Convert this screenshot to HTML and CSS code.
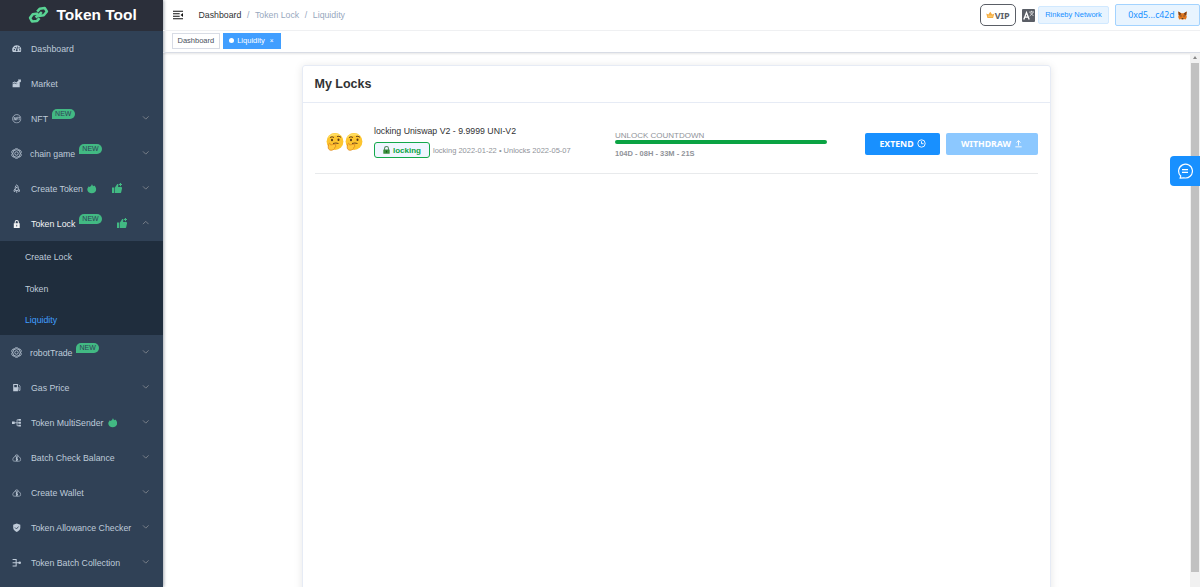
FILE: index.html
```html
<!DOCTYPE html>
<html lang="en">
<head>
    <meta charset="utf-8">
    <title>Token Tool</title>
    <link rel="stylesheet" href="styles.css">
</head>
<body>
    <svg class="sprite">
        <symbol id="down" viewBox="0 0 8 8"><path d="M1 2.5l3 3 3-3" fill="none" stroke="currentColor" stroke-width=".8"/></symbol>
        <symbol id="gauge" viewBox="0 0 16 16"><path fill="currentColor" fill-rule="evenodd" d="M8 2a7.5 7.5 0 0 0-6.500 11.500h13A7.500 7.500 0 0 0 8 2zM3 8.500h2v2H3zM4.500 5h2v2h-2zM8.500 4h1.500L9 9.500a1.500 1.500 0 1 1-2 0zM11 5.500h2v2h-2zM12 9h2v2h-2z"/></symbol>
        <symbol id="chart" viewBox="0 0 16 16"><path fill="currentColor" d="M1 9l3-2 3 2 6-5v10H1zM1 6l3.500-2L7 6l4-3.500L10 1h5v5l-1.300-1.500L7 8 4.500 6 1 8z"/></symbol>
        <symbol id="nft" viewBox="0 0 16 16"><circle cx="8" cy="8" r="7" fill="none" stroke="currentColor" stroke-width="1.200"/><path d="M3.800 10.500v-5l2.500 5v-5M8 10.500v-5h2M8 8h2M10.500 5.500h3M12 5.500v5" fill="none" stroke="currentColor" stroke-width="1.200"/></symbol>
        <symbol id="atom" viewBox="0 0 16 16"><g fill="none" stroke="currentColor" stroke-width="1.200"><circle cx="8" cy="8" r="2.500"/><circle cx="8" cy="8" r="5.500"/><path d="M5 2.500C6 .500 10 .500 11 2.500l2.800 1c1.500 1.500 1.500 3 .2 4.500 1.300 1.500 1.300 3-.2 4.500l-2.800 1c-1 2-5 2-6 0l-2.800-1C.700 11 .700 9.500 2 8 .700 6.500.700 5 2.200 3.500z"/></g></symbol>
        <symbol id="rocket" viewBox="0 0 16 16"><path d="M5.500 11V5.500C5.500 3.500 7 2 8 1.500c1 .5 2.500 2 2.500 4V11zM5.500 8L3.500 10v2.500h2M10.500 8l2 2v2.500h-2M8 11v4" fill="none" stroke="currentColor" stroke-width="1.400"/><circle cx="8" cy="6" r="1.300" fill="currentColor"/></symbol>
        <symbol id="lock" viewBox="0 0 16 16"><path fill="currentColor" fill-rule="evenodd" d="M3 7h1.500V5a3.500 3.500 0 0 1 7 0v2H13v8H3zM6.200 7h3.600V5a1.800 1.800 0 0 0-3.600 0zM7.300 9.500v3h1.400v-3z"/></symbol>
        <symbol id="gas" viewBox="0 0 16 16"><path fill="currentColor" fill-rule="evenodd" d="M2 1.500h8V14H2zM3.800 3.500V7h4.400V3.500z"/><path d="M10 8h1.500v4.500h2V5L11.500 3" fill="none" stroke="currentColor" stroke-width="1.200"/></symbol>
        <symbol id="tree" viewBox="0 0 16 16"><path d="M2 8h7M12 3H8.500v10H12M9 8h3" fill="none" stroke="currentColor" stroke-width="1.300"/><path fill="currentColor" d="M0 6h4.500v4H0zM11 1.500h4v3h-4zM11 6.500h4v3h-4zM11 11.500h4v3h-4z"/></symbol>
        <symbol id="wallet" viewBox="0 0 16 16"><path d="M5.500 5.500a2.500 2.500 0 1 1 5 0C14 7 15 10 14.500 12.500c-.5 2-12.500 2-13 0C1 10 2 7 5.500 5.500zM5.500 5.500h5" fill="none" stroke="currentColor" stroke-width="1.100"/><path d="M8 6.500v7M9.500 8H7.300v2h1.900v2H6.500" fill="none" stroke="currentColor" stroke-width="1.500"/></symbol>
        <symbol id="shield" viewBox="0 0 16 16"><path fill="currentColor" d="M8 1l6 2v5c0 3.500-3 5.500-6 7-3-1.500-6-3.500-6-7V3z"/><path d="M5 7.500L7.500 10 11 6" fill="none" stroke="#304156" stroke-width="1.500"/></symbol>
        <symbol id="merge" viewBox="0 0 16 16"><path d="M1 2.500h6v11H1M1 8h12" fill="none" stroke="currentColor" stroke-width="1.700"/><circle cx="13" cy="8" r="2.200" fill="currentColor"/></symbol>
        <symbol id="flame" viewBox="0 0 16 16"><path fill="currentColor" d="M8.500 0c0 2.500 1.500 3.500 3 4l1-1c2 2 3 4.500 3 6.500C15.500 13.500 12 16 8 16S.500 13.500.500 9.500C.500 7 2 5.500 3 4l1 1.500C6.500 4.500 8 2.500 8.500 0z"/></symbol>
        <symbol id="thumb" viewBox="0 0 16 16"><path fill="currentColor" d="M0 7h3.500v8.500H0zM4.500 7L8 1.500c2 0 2 2 1.200 4.500H14c1 0 1.500 1 1.300 2L14 14c-.3 1-1 1.500-2 1.500H4.500zM12 0h1.700v1.500h1.800v1.700h-1.800V5H12V3.200h-1.600V1.500H12z"/></symbol>
        <symbol id="thinking" viewBox="0 0 18 18">
            <circle cx="9" cy="8.500" r="8.400" fill="#fdc52f"/><path d="M1.500 5.500A8.400 8.400 0 0 1 16 4C12 1.500 5 2 1.500 5.500z" fill="#ffde62"/>
            <path d="M4 4.500Q6 3 8 4.500M11 3.500q2-1 4 .8M7 10.500q3-1 5.500 0" fill="none" stroke="#6a431c"/>
            <ellipse cx="6" cy="7" rx="1" ry="1.300" fill="#5b3817"/><ellipse cx="12.500" cy="6.800" rx="1" ry="1.300" fill="#5b3817"/>
            <path d="M3 10.500c1-.6 1.500.3 1.700 1.500l4.300-.8c1.500 0 1.200 1.400 0 1.600 1.200.7.800 1.500-.3 1.700.3 1.400-1.500 2.500-3.500 2.800-2 0-3.200-1.500-3-3.500z" fill="#ffc83a" stroke="#df8820" stroke-width=".8"/>
        </symbol>
    </svg>

    <div class="app">
        <aside class="sidebar">
            <div class="logo">
                <svg viewBox="0 0 22 18"><g fill="none" stroke="#5ad495" stroke-width="2.700" stroke-linejoin="round"><path d="M10.500 7.500L5 8.200 2.200 12l2 3.800 5.300-.6 2.500-3M11 10l5.500-.7 3.300-4-2.300-3.600-5.300.8-2.600 3M8 11.700L14.500 6"/></g></svg>
                <span>Token Tool</span>
            </div>
            <ul class="menu">
                <li><svg class="ico"><use href="#gauge"/></svg>Dashboard</li>
                <li><svg class="ico"><use href="#chart"/></svg>Market</li>
                <li><svg class="ico"><use href="#nft"/></svg>NFT<b class="new">NEW</b><svg class="arrow"><use href="#down"/></svg></li>
                <li class="wide"><svg class="ico"><use href="#atom"/></svg>chain game<b class="new">NEW</b><svg class="arrow"><use href="#down"/></svg></li>
                <li><svg class="ico"><use href="#rocket"/></svg>Create Token<svg class="flame"><use href="#flame"/></svg><svg class="thumb"><use href="#thumb"/></svg><svg class="arrow"><use href="#down"/></svg></li>
                <li class="open"><svg class="ico"><use href="#lock"/></svg>Token Lock<b class="new">NEW</b><svg class="thumb"><use href="#thumb"/></svg><svg class="arrow"><use href="#down"/></svg></li>
            </ul>
            <ul class="submenu">
                <li>Create Lock</li>
                <li>Token</li>
                <li class="active">Liquidity</li>
            </ul>
            <ul class="menu">
                <li class="wide"><svg class="ico"><use href="#atom"/></svg>robotTrade<b class="new">NEW</b><svg class="arrow"><use href="#down"/></svg></li>
                <li><svg class="ico"><use href="#gas"/></svg>Gas Price<svg class="arrow"><use href="#down"/></svg></li>
                <li><svg class="ico"><use href="#tree"/></svg>Token MultiSender<svg class="flame"><use href="#flame"/></svg><svg class="arrow"><use href="#down"/></svg></li>
                <li><svg class="ico"><use href="#wallet"/></svg>Batch Check Balance<svg class="arrow"><use href="#down"/></svg></li>
                <li><svg class="ico"><use href="#wallet"/></svg>Create Wallet<svg class="arrow"><use href="#down"/></svg></li>
                <li><svg class="ico"><use href="#shield"/></svg>Token Allowance Checker<svg class="arrow"><use href="#down"/></svg></li>
                <li><svg class="ico"><use href="#merge"/></svg>Token Batch Collection<svg class="arrow"><use href="#down"/></svg></li>
            </ul>
        </aside>

        <div class="main">
            <header class="navbar">
                <svg class="hamburger" viewBox="0 0 11 10"><path d="M0 1h10.500M0 3.700h7M0 6.300h7M0 9h10.500" stroke="#111" stroke-width="1.100"/><path d="M10.500 3v4L8 5z" fill="#111"/></svg>
                <div class="breadcrumb"><span class="link">Dashboard</span><i>/</i><span>Token Lock</span><i>/</i><span>Liquidity</span></div>
                <div class="vip">
                    <svg viewBox="0 0 9 8"><path d="M.3 2.500l2.200 1L4.500.500l2 3 2.200-1L7.500 7.300h-6z" fill="#f5ad42"/><path d="M2 5.200h5" stroke="#ffd98a"/></svg>VIP
                </div>
                <svg class="lang" viewBox="0 0 13 13"><rect width="13" height="13" rx="1" fill="#5a5e66"/><path d="M1.800 10.500L4.500 3.500l2.700 7M2.800 8.200h3.500" fill="none" stroke="#fff" stroke-width="1.300"/><path d="M7.300 3h4.700M9.600 1.800V3M8 3.500l3.500 3.500M11.300 3.500L7.700 7" fill="none" stroke="#fff" stroke-width=".7"/></svg>
                <div class="network">Rinkeby Network</div>
                <div class="account">0xd5...c42d
                    <svg viewBox="0 0 9 9"><path d="M.3.500l3 1.800h2.400l3-1.800-.4 3.500.5 2-1 2.500-2-.5-.6.700H3.800L3.200 8l-2 .5-1-2.500.5-2z" fill="#e2761b"/><path d="M.3.500l3 2L2 4.500.7 4zM8.700.500l-3 2L7 4.500 8.300 4z" fill="#7b3f18"/><path d="M2.300 5h1.200M5.500 5h1.200M3.700 7.500h1.600" stroke="#233447" stroke-width=".8"/></svg>
                </div>
            </header>
            <div class="tags">
                <span class="tag">Dashboard</span>
                <span class="tag current">Liquidity<i>×</i></span>
            </div>
            <div class="content">
                <div class="page">
                    <section class="card">
                        <h1>My Locks</h1>
                        <div class="lock-row">
                            <div class="pair"><svg><use href="#thinking"/></svg><svg><use href="#thinking"/></svg></div>
                            <div class="info">
                                <div class="name">locking Uniswap V2 - 9.9999 UNI-V2</div>
                                <div class="detail">
                                    <span class="status"><svg viewBox="0 0 7 8"><path d="M1.500 4V2.500a2 2 0 0 1 4 0V4" fill="none" stroke="#5b8d68" stroke-width="1.100"/><rect x=".3" y="3.500" width="6.400" height="4.300" rx=".5" fill="#388e3c"/><path d="M3.500 4.800v1.700" stroke="#164d1c" stroke-width=".9"/></svg>locking</span>
                                    <span class="dates">locking 2022-01-22 • Unlocks 2022-05-07</span>
                                </div>
                            </div>
                            <div class="countdown">
                                <div class="label">UNLOCK COUNTDOWN</div>
                                <div class="bar"></div>
                                <div class="time">104D - 08H - 33M - 21S</div>
                            </div>
                            <div class="buttons">
                                <button class="extend">EXTEND<svg viewBox="0 0 10 10"><circle cx="5" cy="5" r="4.100"/><path d="M5 2.500V5.200H7.300"/></svg></button>
                                <button class="withdraw">WITHDRAW<svg viewBox="0 0 10 10"><path d="M5 7.300V1.800M2.800 4L5 1.800 7.200 4M1.500 8.700h7"/></svg></button>
                            </div>
                        </div>
                    </section>
                </div>
                <div class="scrollbar"><span class="up"></span><span class="handle"></span></div>
            </div>
        </div>
    </div>
    <div class="chat">
        <svg viewBox="0 0 16 16"><path d="M3.200 15l.5-2A6.900 6.900 0 1 1 7 14.800zM5 6.700h6M5 9.300h6" fill="none" stroke="#fff" stroke-width="1.200"/></svg>
    </div>
</body>
</html>
```
FILE: styles.css
```css
* {
    box-sizing: border-box;
}
html, body {
    margin: 0;
    height: 100%;
    overflow: hidden;
}
body {
    font-family: "Liberation Sans", Arial, sans-serif;
    font-size: 8.75px;
    color: #303133;
    background: #fff;
}
ul {
    list-style: none;
    margin: 0;
    padding: 0;
}
i {
    font-style: normal;
}
svg {
    flex: none;
}
.sprite {
    display: none;
}
.app {
    display: flex;
    height: 100%;
}

/* sidebar */
.sidebar {
    flex: none;
    width: 162.500px;
    background: #304156;
    color: #bfcbd9;
    overflow: hidden;
    box-shadow: 1px 0 3px rgba(0,21,41,.35);
}
.logo {
    display: flex;
    align-items: center;
    height: 31.250px;
    padding: 0 0 1px 28px;
    background: #2b2f3a;
    color: #fff;
    font-size: 15.500px;
    font-weight: bold;
}
.logo svg {
    width: 21px;
    height: 18px;
    margin-right: 7.500px;
}
.menu li {
    display: flex;
    align-items: center;
    height: 35px;
    padding: 0 13px 0 12px;
    white-space: nowrap;
}
.ico {
    width: 9.500px;
    height: 9.500px;
    margin-right: 9.500px;
}
.menu .wide {
    padding-left: 11px;
}
.wide .ico {
    width: 11px;
    height: 11px;
    margin-right: 8px;
}
.menu .open {
    color: #f4f4f5;
}
.new {
    width: 22.500px;
    height: 10px;
    margin: 0 0 9px 4px;
    border-radius: 5px 5px 5px 0;
    background: #42b983;
    color: #304156;
    font-size: 7px;
    line-height: 10px;
    font-weight: normal;
    text-align: center;
}
.flame {
    width: 9.500px;
    height: 11px;
    margin-left: 4.500px;
    color: #42b983;
}
.thumb {
    width: 10.500px;
    height: 10.500px;
    margin: 0 0 2px 15px;
    color: #42b983;
}
.arrow {
    width: 7.500px;
    height: 7.500px;
    margin: 0 0 2px auto;
    color: #909399;
}
.open .arrow {
    transform: rotate(180deg);
}
.submenu {
    background: #1f2d3d;
}
.submenu li {
    height: 31.250px;
    line-height: 32px;
    padding-left: 25px;
}
.submenu .active {
    color: #409eff;
}

/* top bars */
.main {
    flex: 1;
    display: flex;
    flex-direction: column;
    min-width: 0;
}
.navbar {
    display: flex;
    align-items: center;
    height: 31.250px;
    padding-left: 10.500px;
    border-bottom: 1px solid #f0f1f3;
}
.hamburger {
    width: 10.500px;
    height: 10px;
    margin: 0 15px 1px 0;
}
.breadcrumb {
    margin-right: auto;
    color: #97a8be;
}
.breadcrumb i {
    margin: 0 5.600px;
}
.breadcrumb .link {
    color: #303133;
}
.vip {
    display: flex;
    align-items: center;
    justify-content: center;
    width: 36.500px;
    height: 22.500px;
    border: 1.500px solid #5a5e66;
    border-radius: 5px;
    color: #5a5e66;
    font: bold 9px "Noto Sans", sans-serif;
}
.vip svg {
    width: 8.500px;
    height: 8px;
    margin-right: .5px;
}
.lang {
    width: 13px;
    height: 13px;
    margin: 0 3px 0 6px;
}
.network {
    width: 71px;
    height: 17.500px;
    border: 1px solid #d1e9ff;
    border-radius: 2px;
    background: #e8f4ff;
    color: #1890ff;
    font-size: 7.500px;
    line-height: 16.500px;
    text-align: center;
}
.account {
    display: flex;
    align-items: center;
    justify-content: center;
    gap: 3px;
    width: 85px;
    height: 22.500px;
    margin-left: 6px;
    border: 1px solid #a3d3ff;
    border-radius: 2px;
    background: #e8f4ff;
    color: #1890ff;
    font: 8.750px "Noto Sans", sans-serif;
}
.account svg {
    width: 9px;
    height: 9px;
}
.tags {
    display: flex;
    align-items: center;
    gap: 3px;
    height: 21.250px;
    padding: 0 0 1px 9px;
    border-bottom: 1px solid #d8dce5;
    box-shadow: 0 1px 2px rgba(0,0,0,.1);
    font-size: 7.500px;
}
.tag {
    display: flex;
    align-items: center;
    height: 16.250px;
    padding: 0 5px;
    border: 1px solid #d8dce5;
    color: #495060;
}
.current {
    border-color: #409eff;
    background: #409eff;
    color: #fff;
}
.current::before {
    content: "";
    width: 5px;
    height: 5px;
    margin-right: 3px;
    border-radius: 50%;
    background: #fff;
}
.current i {
    margin: 0 1.500px 0 5px;
    font-size: 6.500px;
}

/* content */
.content {
    flex: 1;
    display: flex;
    min-height: 0;
}
.page {
    flex: 1;
    padding: 12px 138.500px 0 139px;
}
.card {
    height: 600px;
    padding: 0 12px;
    border: 1px solid #e6ebf5;
    border-radius: 3px;
    box-shadow: 0 1px 8px rgba(0,0,0,.1);
}
.card h1 {
    height: 37px;
    margin: 0 -12px;
    padding-left: 12px;
    border-bottom: 1px solid #e6ebf5;
    font-size: 12.500px;
    line-height: 36px;
}
.lock-row {
    display: flex;
    align-items: center;
    height: 71.500px;
    padding: 9px 0 0 11px;
    border-bottom: 1px solid #e8eaec;
}
.pair {
    display: flex;
    gap: 1px;
    width: 48.500px;
}
.pair svg {
    width: 18px;
    height: 18px;
}
.info {
    width: 241px;
    padding-bottom: 1px;
    white-space: nowrap;
}
.name {
    height: 17px;
    line-height: 12px;
}
.detail {
    display: flex;
    align-items: center;
}
.status {
    display: flex;
    align-items: center;
    justify-content: center;
    width: 56px;
    height: 16px;
    margin-right: 3px;
    border: 1px solid #13a84b;
    border-radius: 3px;
    background: #f0f5ff;
    color: #0ba343;
    font-size: 8px;
    font-weight: bold;
}
.status svg {
    width: 7px;
    height: 8px;
    margin-right: 3px;
}
.dates {
    color: #909399;
    font-size: 7.500px;
}
.countdown {
    width: 212px;
    padding-top: 4px;
    color: #909399;
    font-size: 7.500px;
}
.label {
    height: 9.500px;
    line-height: 9px;
    font-size: 8px;
}
.bar {
    height: 4px;
    border-radius: 2px;
    background: #0ba343;
}
.time {
    margin-top: 5px;
    font-weight: bold;
}
.buttons {
    display: flex;
    gap: 6px;
    margin: 3px 0 0 auto;
}
button {
    display: flex;
    align-items: center;
    justify-content: center;
    height: 22.500px;
    padding: 0;
    border: 0;
    border-radius: 2px;
    color: #fff;
    font: bold 8.750px "Noto Sans", sans-serif;
}
button svg {
    width: 9px;
    height: 9px;
    margin-left: 3px;
    fill: none;
    stroke: #fff;
}
.extend {
    width: 75px;
    background: #1890ff;
}
.withdraw {
    width: 92px;
    background: #8cc8ff;
}
.scrollbar {
    display: flex;
    flex-direction: column;
    align-items: center;
    width: 10.500px;
    background: #f1f1f1;
}
.up {
    margin: 3px 0 4px;
    border: 2.500px solid transparent;
    border-top-width: 0;
    border-bottom: 3px solid #888;
}
.handle {
    width: 8.500px;
    height: 509px;
    background: #c1c1c1;
}
.chat {
    position: fixed;
    right: 0;
    top: 155.500px;
    display: flex;
    align-items: center;
    justify-content: center;
    width: 30px;
    height: 30px;
    border-radius: 4px 0 0 4px;
    background: #1890ff;
}
.chat svg {
    width: 16px;
    height: 16px;
}
```
